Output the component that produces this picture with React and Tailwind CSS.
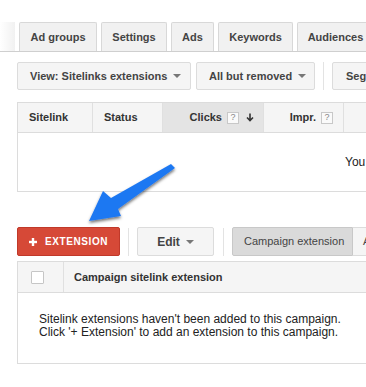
import React from 'react';

const Caret = () => (
    <span className="inline-block w-0 h-0 border-l-[4px] border-r-[4px] border-t-[4px] border-l-transparent border-r-transparent border-t-[#777]"></span>
);

const Help = () => (
    <span className="inline-flex items-center justify-center w-[12px] h-[12px] border border-[#c8c8c8] bg-[#fafafa] text-[9px] leading-none text-[#888] font-normal">?</span>
);

const tabs = [
    { label: 'Ad groups', w: 'w-[78px]' },
    { label: 'Settings', w: 'w-[66px]' },
    { label: 'Ads', w: 'w-[43px]' },
    { label: 'Keywords', w: 'w-[75px]' },
    { label: 'Audiences', w: 'w-[77px]' },
];

const App = () => {
    return (
        <div className="relative w-[366px] h-[387px] overflow-hidden bg-white font-['Liberation_Sans',Arial,sans-serif] text-[#333]">
            <div className="h-[22px]"></div>

            {/* Tabs */}
            <div className="flex items-end gap-[4px] h-[30px] border-b border-[#cfcfcf] whitespace-nowrap">
                <div className="w-[15px] shrink-0 h-full bg-gradient-to-r from-white to-[#f1f1f1]"></div>
                {tabs.map((t) => (
                    <div
                        key={t.label}
                        className={`${t.w} shrink-0 h-[29px] flex items-center justify-center bg-[#f1f1f1] border border-b-0 border-[#d8d8d8] rounded-t-[2px] text-[11px] font-bold text-[#444]`}
                    >
                        {t.label}
                    </div>
                ))}
            </div>

            {/* Toolbar */}
            <div className="flex items-center h-[28px] mt-[10px] pl-[17px] whitespace-nowrap">
                <button className="shrink-0 h-[28px] w-[174px] flex items-center gap-[6px] pl-[12px] bg-[#f5f5f5] border border-[#dcdcdc] rounded-[2px] text-[11px] font-bold text-[#444]">
                    View: Sitelinks extensions <Caret />
                </button>
                <button className="shrink-0 ml-[5px] h-[28px] w-[119px] flex items-center gap-[6px] pl-[12px] bg-[#f5f5f5] border border-[#dcdcdc] rounded-[2px] text-[11px] font-bold text-[#444]">
                    All but removed <Caret />
                </button>
                <div className="shrink-0 ml-[8px] w-px h-[28px] bg-[#e3e3e3]"></div>
                <button className="shrink-0 ml-[8px] h-[28px] w-[90px] flex items-center pl-[13px] bg-[#f5f5f5] border border-[#dcdcdc] rounded-[2px] text-[11px] font-bold text-[#444]">
                    Segment
                </button>
            </div>

            {/* Stats table */}
            <div className="mt-[12px] ml-[17px] w-[400px] border-l border-[#dcdcdc]">
                <div className="flex h-[31px] bg-[#f5f5f5] border-t border-b border-[#dcdcdc] text-[11px] font-bold text-[#333] whitespace-nowrap">
                    <div className="w-[75px] shrink-0 flex items-center pl-[11px] border-r border-[#e0e0e0]">Sitelink</div>
                    <div className="w-[70px] shrink-0 flex items-center pl-[11px] border-r border-[#e0e0e0]">Status</div>
                    <div className="w-[101px] shrink-0 flex items-center justify-end gap-[5px] pr-[9px] bg-[#e4e4e4] border-r border-[#e0e0e0]">
                        Clicks <Help />
                        <svg width="8" height="9" viewBox="0 0 8 9" className="ml-[2px]">
                            <path d="M4 0.5 V7.5 M1 4.5 L4 7.5 L7 4.5" stroke="#333" strokeWidth="1.6" fill="none" />
                        </svg>
                    </div>
                    <div className="w-[80px] shrink-0 flex items-center justify-end gap-[5px] pr-[10px] border-r border-[#e0e0e0]">
                        Impr. <Help />
                    </div>
                    <div className="flex-1"></div>
                </div>
                <div className="h-[59px] flex items-center pl-[327px] border-b border-[#dcdcdc] text-[12px] text-[#222] whitespace-nowrap">
                    You don't have any sitelink data
                </div>
            </div>

            {/* Extension actions */}
            <div className="flex items-center h-[29px] mt-[35px] pl-[17px] whitespace-nowrap">
                <button className="shrink-0 h-[29px] w-[103px] flex items-center justify-center gap-[8px] bg-[#d64937] border border-[#c0392a] rounded-[2px] text-white text-[10px] font-bold tracking-[0.6px]">
                    <svg width="8" height="8" viewBox="0 0 8 8">
                        <rect x="2.8" y="0" width="2.4" height="8" fill="#fff" />
                        <rect x="0" y="2.8" width="8" height="2.4" fill="#fff" />
                    </svg>
                    EXTENSION
                </button>
                <div className="shrink-0 ml-[8px] w-px h-[28px] bg-[#e3e3e3]"></div>
                <button className="shrink-0 ml-[8px] h-[29px] w-[77px] flex items-center justify-center gap-[6px] bg-[#f5f5f5] border border-[#dcdcdc] rounded-[2px] text-[12px] font-bold text-[#444]">
                    Edit <Caret />
                </button>
                <div className="shrink-0 ml-[9px] w-px h-[28px] bg-[#e3e3e3]"></div>
                <div className="shrink-0 ml-[8px] flex h-[29px]">
                    <button className="w-[121px] h-full flex items-center pl-[11px] bg-[#dadada] border border-[#c8c8c8] rounded-l-[2px] text-[11px] text-[#444]">
                        Campaign extension
                    </button>
                    <button className="w-[120px] h-full flex items-center pl-[10px] bg-[#f5f5f5] border border-l-0 border-[#dcdcdc] text-[11px] text-[#444]">
                        Ad group extension
                    </button>
                </div>
            </div>

            {/* Extensions table */}
            <div className="mt-[5px] ml-[17px] w-[400px] border-l border-[#dcdcdc]">
                <div className="flex h-[32px] bg-[#f5f5f5] border-t border-b border-[#dcdcdc] whitespace-nowrap">
                    <div className="w-[46px] shrink-0 flex items-center pl-[13px] border-r border-[#e0e0e0]">
                        <span className="w-[13px] h-[13px] bg-white border border-[#c6c6c6] rounded-[1px]"></span>
                    </div>
                    <div className="flex items-center pl-[10px] text-[11px] font-bold text-[#333]">Campaign sitelink extension</div>
                </div>
                <div className="h-[71px] pt-[20px] pl-[21px] border-b border-[#dcdcdc] text-[12px] leading-[13px] text-[#222] whitespace-nowrap">
                    <p>Sitelink extensions haven't been added to this campaign.</p>
                    <p>Click '+ Extension' to add an extension to this campaign.</p>
                </div>
            </div>

            {/* Pointer arrow */}
            <svg className="absolute left-0 top-0 pointer-events-none" width="366" height="387" viewBox="0 0 366 387">
                <defs>
                    <filter id="arrowShadow" x="-20%" y="-20%" width="140%" height="140%">
                        <feDropShadow dx="0" dy="2" stdDeviation="1.5" floodColor="#000" floodOpacity="0.55" />
                    </filter>
                </defs>
                <polygon
                    points="89,221 103,191 111,198 171,164 175,168 118,209 121,216"
                    fill="#1f78f2"
                    filter="url(#arrowShadow)"
                />
            </svg>
        </div>
    );
};

export default App;
